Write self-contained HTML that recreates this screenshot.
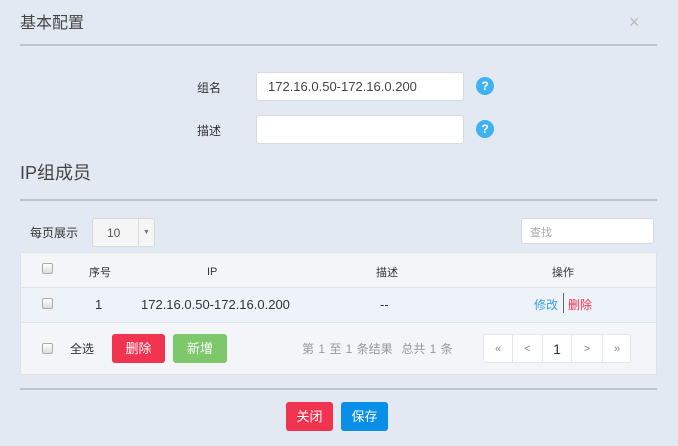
<!DOCTYPE html>
<html><head><meta charset="utf-8"><style>
*{margin:0;padding:0;box-sizing:border-box}
body{width:678px;height:446px;background:#e3e9f2;font-family:"Liberation Sans","Noto Sans CJK SC",sans-serif;color:#333;position:relative;overflow:hidden;font-size:12px}
.a{position:absolute}
.line{position:absolute;left:20px;width:637px;height:2px;background:#bcc3cc}
.inp{position:absolute;background:#fff;border:1px solid #d5dae0;border-radius:3px}
.q{position:absolute;width:18px;height:18px;border-radius:50%;background:#3fb2f2;color:#fff;font-size:12px;text-align:center;line-height:18px;font-weight:bold}
.cb{position:absolute;width:11px;height:11px;border:1px solid #aaa;border-radius:2px;background:linear-gradient(#fff,#ddd)}
.btn{position:absolute;color:#fff;text-align:center;border-radius:3px;font-size:13px}
.pg{position:absolute;top:0;height:28px;line-height:28px;text-align:center;border-right:1px solid #e3e6ea;color:#888;font-size:11px}
</style></head><body>
<div class="a" style="left:20px;top:9px;font-size:16px;color:#444">基本配置</div>
<div class="a" style="left:629px;top:12px;font-size:18px;color:#bbb">×</div>
<div class="line" style="top:44px"></div>
<div class="a" style="left:197px;top:79px;font-size:12px">组名</div>
<div class="inp" style="left:256px;top:72px;width:208px;height:29px;padding:6px 0 0 11px;font-size:13px;color:#444">172.16.0.50-172.16.0.200</div>
<div class="q" style="left:476px;top:77px">?</div>
<div class="a" style="left:197px;top:122px;font-size:12px">描述</div>
<div class="inp" style="left:256px;top:115px;width:208px;height:29px"></div>
<div class="q" style="left:476px;top:120px">?</div>
<div class="a" style="left:20px;top:159px;font-size:18px;color:#444">IP组成员</div>
<div class="line" style="top:199px"></div>
<div class="a" style="left:30px;top:224px;font-size:12px">每页展示</div>
<div class="inp" style="left:92px;top:218px;width:63px;height:29px;background:#f5f5f5"><span class="a" style="left:14px;top:7px;font-size:12px;color:#555">10</span><span class="a" style="left:45px;top:0;width:1px;height:27px;background:#ddd"></span><span class="a" style="left:50px;top:10px;font-size:7px;color:#777">▼</span></div>
<div class="inp" style="left:521px;top:218px;width:133px;height:26px;padding:5px 0 0 8px;color:#aaa;font-size:11px">查找</div>
<div class="a" style="left:20px;top:252px;width:637px;height:123px;border:1px solid #dfe3e8;background:#f3f5f9">
 <div class="a" style="left:0;top:34px;width:635px;height:36px;background:#edf3f8;border-top:1px solid #dfe3e8;border-bottom:1px solid #dfe3e8"></div>
</div>
<div class="cb" style="left:42px;top:263px"></div>
<div class="a" style="left:89px;top:264px;font-size:11px">序号</div>
<div class="a" style="left:207px;top:266px;font-size:11px">IP</div>
<div class="a" style="left:376px;top:264px;font-size:11px">描述</div>
<div class="a" style="left:552px;top:264px;font-size:11px">操作</div>
<div class="cb" style="left:42px;top:298px"></div>
<div class="a" style="left:95px;top:297px;font-size:13px">1</div>
<div class="a" style="left:141px;top:297px;font-size:13px">172.16.0.50-172.16.0.200</div>
<div class="a" style="left:380px;top:297px;font-size:13px">--</div>
<div class="a" style="left:534px;top:296px;font-size:12px;color:#3fa0e0">修改</div>
<div class="a" style="left:563px;top:293px;width:1px;height:20px;background:#666"></div>
<div class="a" style="left:568px;top:296px;font-size:12px;color:#f0334f">删除</div>
<div class="cb" style="left:42px;top:343px"></div>
<div class="a" style="left:70px;top:340px;font-size:12px">全选</div>
<div class="btn" style="left:112px;top:334px;width:53px;height:29px;line-height:29px;background:#f0334f">删除</div>
<div class="btn" style="left:173px;top:334px;width:54px;height:29px;line-height:29px;background:#7cc86a">新增</div>
<div class="a" style="left:302px;top:340px;font-size:12px;color:#999;word-spacing:1px">第 1 至 1 条结果 &nbsp;总共 1 条</div>
<div class="a" style="left:483px;top:334px;width:148px;height:29px;background:#fff;border:1px solid #e3e6ea;border-radius:3px">
 <div class="pg" style="left:0;width:29px">«</div>
 <div class="pg" style="left:29px;width:30px">&lt;</div>
 <div class="pg" style="left:59px;width:29px;color:#333;font-size:14px">1</div>
 <div class="pg" style="left:88px;width:31px">&gt;</div>
 <div class="pg" style="left:119px;width:28px;border:none">»</div>
</div>
<div class="line" style="top:388px"></div>
<div class="btn" style="left:286px;top:402px;width:47px;height:29px;line-height:29px;background:#f0334f">关闭</div>
<div class="btn" style="left:341px;top:402px;width:47px;height:29px;line-height:29px;background:#0a8fe8">保存</div>
</body></html>
